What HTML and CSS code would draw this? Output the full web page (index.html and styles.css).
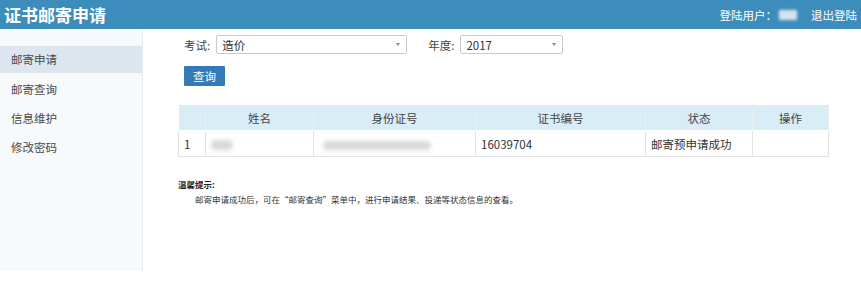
FILE: index.html
```html
<!DOCTYPE html>
<html lang="zh-CN">
<head>
    <meta charset="UTF-8">
    <title>证书邮寄申请</title>
    <link rel="stylesheet" href="styles.css">
</head>
<body>
    <div class="header">
        <h1>证书邮寄申请</h1>
        <div class="user-bar">
            <span>登陆用户：</span>
            <span class="blur-name"></span>
            <a href="#">退出登陆</a>
        </div>
    </div>
    <div class="layout">
        <div class="sidebar">
            <a href="#" class="active">邮寄申请</a>
            <a href="#">邮寄查询</a>
            <a href="#">信息维护</a>
            <a href="#">修改密码</a>
        </div>
        <div class="main">
            <form class="query-form">
                <div class="form-row">
                    <label>考试:</label>
                    <div class="select select-exam"><span>造价</span><i class="caret"></i></div>
                    <label class="label-year">年度:</label>
                    <div class="select select-year"><span>2017</span><i class="caret"></i></div>
                </div>
                <button type="button">查询</button>
            </form>
            <table class="result-table">
                <thead>
                    <tr>
                        <th class="col-no"></th>
                        <th class="col-name">姓名</th>
                        <th class="col-id">身份证号</th>
                        <th class="col-cert">证书编号</th>
                        <th class="col-state">状态</th>
                        <th class="col-op">操作</th>
                    </tr>
                </thead>
                <tbody>
                    <tr>
                        <td>1</td>
                        <td><span class="blur blur-name-cell"></span></td>
                        <td><span class="blur blur-id"></span></td>
                        <td>16039704</td>
                        <td>邮寄预申请成功</td>
                        <td></td>
                    </tr>
                </tbody>
            </table>
            <div class="tips">
                <h5>温馨提示:</h5>
                <p>邮寄申请成功后，可在“邮寄查询”菜单中，进行申请结果、投递等状态信息的查看。</p>
            </div>
        </div>
    </div>
</body>
</html>
```

FILE: styles.css
```css
body {
    margin: 0;
    font-family: "Noto Sans CJK SC", "Noto Sans", sans-serif;
    font-size: 12px;
    color: #333;
    background: #fff;
}
.header {
    height: 29px;
    background: #3c8dbc;
    color: #fff;
    display: flex;
    align-items: center;
    justify-content: space-between;
    padding: 0 4px 0 4px;
}
.header h1 {
    margin: 0;
    font-size: 17px;
    font-weight: bold;
}
.user-bar {
    display: flex;
    align-items: center;
    font-size: 11.5px;
}
.user-bar a {
    color: #fff;
    text-decoration: none;
    margin-left: 14px;
}
.blur-name {
    display: inline-block;
    width: 18px;
    height: 10px;
    background: #d6e4ef;
    filter: blur(1.5px);
    margin-left: 2px;
}
.layout {
    display: flex;
    align-items: flex-start;
}
.sidebar {
    width: 142px;
    height: 225px;
    background: #f7f9fb;
    border-right: 1px solid #e8ebee;
    padding-top: 17px;
}
.sidebar a {
    display: block;
    height: 29px;
    line-height: 29px;
    padding-left: 11px;
    color: #4a4a4a;
    text-decoration: none;
    font-size: 11.5px;
}
.sidebar a.active {
    background: #dce6ee;
    line-height: 27px;
    height: 27px;
    margin-bottom: 2px;
}
.main {
    flex: 1;
    padding: 6px 0 0 35px;
}
.query-form .form-row {
    display: flex;
    align-items: center;
    margin-left: 6px;
}
.query-form label {
    font-size: 11.5px;
    color: #444;
    margin-right: 6px;
}
.label-year {
    margin-left: 21px;
}
.select {
    height: 17px;
    border: 1px solid #c9c9c9;
    border-radius: 2px;
    display: flex;
    align-items: center;
    justify-content: space-between;
    padding: 0 6px 0 5px;
    font-size: 11.5px;
    color: #333;
}
.select-exam { width: 178px; }
.select-year { width: 90px; }
.caret {
    width: 0;
    height: 0;
    border-left: 2.5px solid transparent;
    border-right: 2.5px solid transparent;
    border-top: 3px solid #888;
}
.query-form button {
    margin: 12px 0 0 6px;
    width: 41px;
    height: 20px;
    background: #337ab7;
    color: #fff;
    border: none;
    border-radius: 1px;
    font-family: inherit;
    font-size: 11.5px;
    padding: 0;
}
.result-table {
    margin-top: 18px;
    width: 651px;
    border-collapse: collapse;
    font-size: 11.5px;
}
.result-table th {
    background: #d9edf7;
    font-weight: normal;
    height: 25px;
    border: 1px solid #ffffff;
    border-right-color: #e9eef1;
    color: #444;
    padding: 0;
}
.result-table td {
    height: 25px;
    border: 1px solid #e3e3e3;
    padding: 0 5px;
    color: #333;
}
.col-no { width: 26px; }
.col-name { width: 107px; }
.col-id { width: 161px; }
.col-cert { width: 169px; }
.col-state { width: 106px; }
.col-op { width: 75px; }
.blur {
    display: inline-block;
    background: #d8d8d8;
    filter: blur(2px);
    border-radius: 6px;
    vertical-align: middle;
}
.blur-name-cell {
    width: 22px;
    height: 10px;
}
.blur-id {
    width: 108px;
    height: 9px;
    margin-left: 4px;
}
.tips {
    margin-top: 21px;
    font-size: 8.5px;
}
.tips h5 {
    margin: 0 0 3px 0;
    font-size: 8.5px;
    font-weight: bold;
    color: #222;
}
.tips p {
    margin: 0 0 0 17px;
    color: #333;
}
```
